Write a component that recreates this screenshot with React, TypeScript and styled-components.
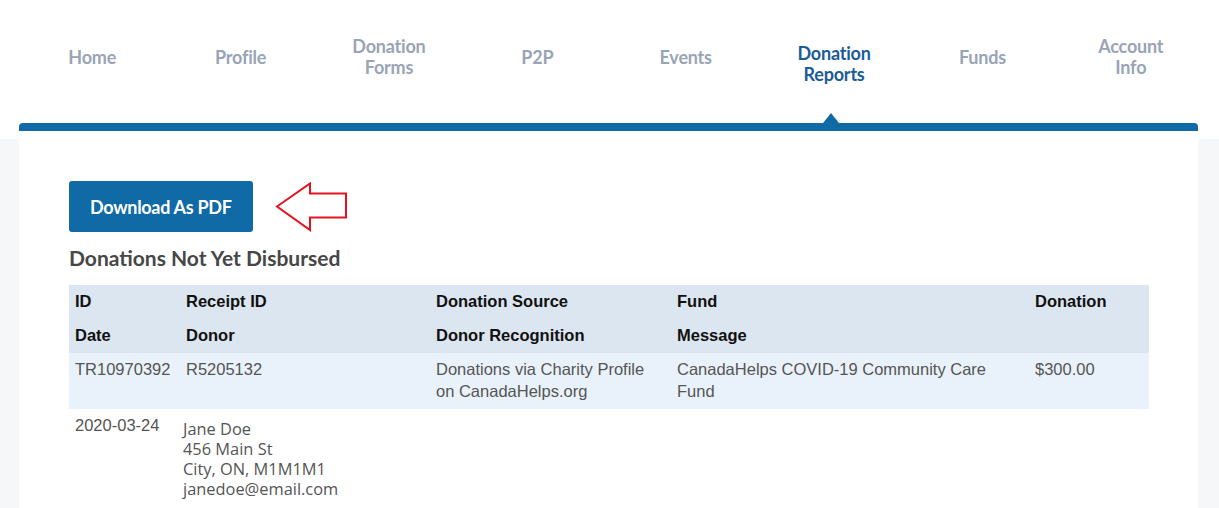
import React from 'react';
import styled, { createGlobalStyle } from 'styled-components';

const GlobalStyle = createGlobalStyle`
  html, body {
    margin: 0;
    padding: 0;
    background: #f6f7f9;
  }
  body {
    font-family: Lato, "Liberation Sans", Arial, sans-serif;
  }
`;

const Page = styled.div`
  min-height: 508px;
  background: #f6f7f9;
`;

const Header = styled.header`
  background: #ffffff;
  padding-bottom: 8px;
`;

const Nav = styled.nav`
  display: grid;
  grid-template-columns: repeat(8, 1fr);
  height: 123px;
  padding: 0 14px 9px 18px;
  box-sizing: border-box;
`;

const NavItem = styled.a<{ $active?: boolean }>`
  position: relative;
  display: flex;
  align-items: center;
  justify-content: center;
  height: 114px;
  padding-top: ${(p) => (p.$active ? '14px' : '0')};
  box-sizing: border-box;
  text-align: center;
  font-family: Lato, "Liberation Sans", sans-serif;
  font-weight: 700;
  font-size: 18px;
  line-height: 21px;
  letter-spacing: -0.2px;
  color: ${(p) => (p.$active ? '#1b5c97' : '#99a4b6')};
  cursor: pointer;

  &::after {
    content: '';
    display: ${(p) => (p.$active ? 'block' : 'none')};
    position: absolute;
    left: 50%;
    bottom: -9px;
    margin-left: -11px;
    width: 0;
    height: 0;
    border-left: 8px solid transparent;
    border-right: 8px solid transparent;
    border-bottom: 10px solid #0f6aa5;
  }
`;

const Bar = styled.div`
  height: 8px;
  margin: 0 21px 0 19px;
  background: #0f6aa5;
  border-radius: 4px 4px 0 0;
`;

const Panel = styled.main`
  margin: 0 21px 0 19px;
  background: #ffffff;
  padding: 42px 50px 40px 50px;
`;

const Toolbar = styled.div`
  display: flex;
  align-items: center;
  gap: 22px;
`;

const PdfButton = styled.button`
  height: 51px;
  padding: 0 21px;
  border: none;
  border-radius: 3px;
  background: #0f6aa5;
  color: #ffffff;
  font-family: Lato, "Liberation Sans", sans-serif;
  font-weight: 700;
  font-size: 18px;
  letter-spacing: -0.3px;
  cursor: pointer;
`;

const Heading = styled.h2`
  margin: 14px 0 15px 0;
  font-family: Lato, "Liberation Sans", sans-serif;
  font-weight: 700;
  font-size: 21px;
  line-height: 24px;
  color: #474747;
`;

const Table = styled.table`
  width: 1080px;
  border-collapse: collapse;
  table-layout: fixed;
  font-family: "Liberation Sans", Arial, sans-serif;
  font-size: 16.5px;
`;

const HeadRow = styled.tr`
  background: #dce6f0;
`;

const HeadCell = styled.th`
  padding: 6px 6px 8px 6px;
  line-height: 20px;
  text-align: left;
  font-weight: 700;
  color: #111111;
`;

const BodyRow = styled.tr<{ $shaded?: boolean }>`
  background: ${(p) => (p.$shaded ? '#e9f2fa' : '#ffffff')};
`;

const Cell = styled.td`
  padding: 5px 6px 7px 6px;
  line-height: 22px;
  vertical-align: top;
  color: #555555;
`;

const Address = styled.div`
  margin: 5px 0 0 -3px;
  font-family: "Open Sans", "Noto Sans", sans-serif;
  font-size: 16.4px;
  line-height: 20px;
  color: #555555;
`;

const ArrowMark = () => (
  <svg width="73" height="50" viewBox="0 0 73 50">
    <polygon
      points="2,24.5 35,1.5 35,11.5 71,11.5 71,35.5 35,35.5 35,48 2,24.5"
      fill="none"
      stroke="#e3131d"
      strokeWidth="2"
      strokeLinejoin="miter"
    />
  </svg>
);

const navItems = [
  { label: 'Home' },
  { label: 'Profile' },
  { label: 'Donation Forms', lines: ['Donation', 'Forms'] },
  { label: 'P2P' },
  { label: 'Events' },
  { label: 'Donation Reports', lines: ['Donation', 'Reports'], active: true },
  { label: 'Funds' },
  { label: 'Account Info', lines: ['Account', 'Info'] }
];

const columns = ['111px', '250px', '241px', '358px', '120px'];

const App: React.FC = () => {
  return (
    <Page>
      <GlobalStyle />
      <Header>
        <Nav>
          {navItems.map((item) => (
            <NavItem key={item.label} $active={item.active}>
              {item.lines ? (
                <span>
                  {item.lines[0]}
                  <br />
                  {item.lines[1]}
                </span>
              ) : (
                item.label
              )}
            </NavItem>
          ))}
        </Nav>
        <Bar />
      </Header>
      <Panel>
        <Toolbar>
          <PdfButton>Download As PDF</PdfButton>
          <ArrowMark />
        </Toolbar>
        <Heading>Donations Not Yet Disbursed</Heading>
        <Table>
          <colgroup>
            {columns.map((w, i) => (
              <col key={i} style={{ width: w }} />
            ))}
          </colgroup>
          <thead>
            <HeadRow>
              <HeadCell>ID</HeadCell>
              <HeadCell>Receipt ID</HeadCell>
              <HeadCell>Donation Source</HeadCell>
              <HeadCell>Fund</HeadCell>
              <HeadCell>Donation</HeadCell>
            </HeadRow>
            <HeadRow>
              <HeadCell>Date</HeadCell>
              <HeadCell>Donor</HeadCell>
              <HeadCell>Donor Recognition</HeadCell>
              <HeadCell>Message</HeadCell>
              <HeadCell />
            </HeadRow>
          </thead>
          <tbody>
            <BodyRow $shaded>
              <Cell>TR10970392</Cell>
              <Cell>R5205132</Cell>
              <Cell>Donations via Charity Profile on CanadaHelps.org</Cell>
              <Cell>CanadaHelps COVID-19 Community Care Fund</Cell>
              <Cell>$300.00</Cell>
            </BodyRow>
            <BodyRow>
              <Cell>2020-03-24</Cell>
              <Cell>
                <Address>
                  Jane Doe
                  <br />
                  456 Main St
                  <br />
                  City, ON, M1M1M1
                  <br />
                  janedoe@email.com
                </Address>
              </Cell>
              <Cell />
              <Cell />
              <Cell />
            </BodyRow>
          </tbody>
        </Table>
      </Panel>
    </Page>
  );
};

export default App;
